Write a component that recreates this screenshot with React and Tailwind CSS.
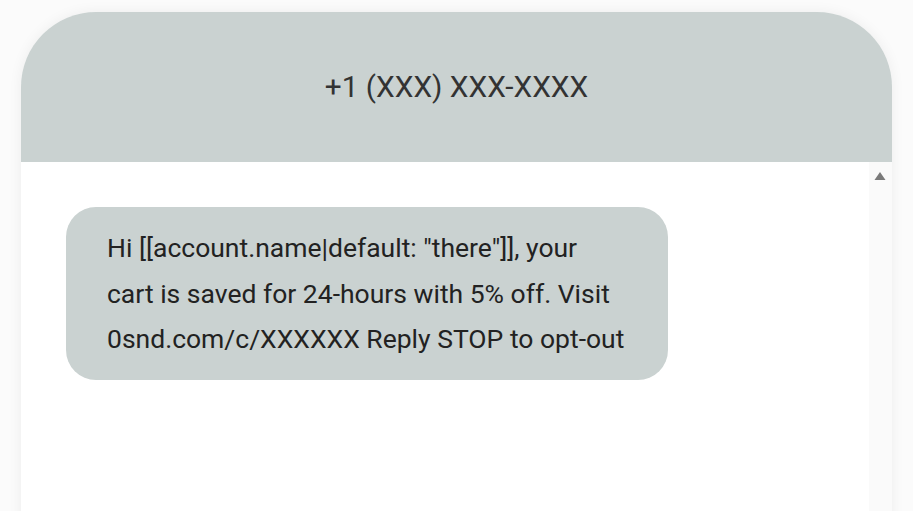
export default function App() {
  return (
    <div className="h-[511px] w-[913px] overflow-hidden bg-[#fbfbfb] pt-3 pl-[21px] pr-[21px]" style={{ fontFamily: "Roboto, 'Noto Sans', sans-serif" }}>
      <div className="flex h-[600px] flex-col overflow-hidden rounded-t-[75px] shadow-[0_0_14px_rgba(0,0,0,0.06)]">
        <div className="flex h-[150px] shrink-0 items-center justify-center bg-[#cad2d1]">
          <span className="text-[29.8px] text-[#333333]">+1 (XXX) XXX-XXXX</span>
        </div>
        <div className="flex flex-1">
          <div className="flex-1 bg-white pl-[45px] pt-[45px]">
            <div className="w-[602px] rounded-[30px] bg-[#cad2d1] py-[18px] pl-[41px] pr-[40px] text-[26.5px] leading-[45.5px] text-[#222222]">
              Hi [[account.name|default: "there"]], your cart is saved for 24-hours with 5% off. Visit 0snd.com/c/XXXXXX Reply STOP to opt-out
            </div>
          </div>
          <div className="w-[23px] shrink-0 bg-[#fafafa] pt-[9px]">
            <svg width="23" height="10" viewBox="0 0 23 10">
              <path d="M11 1 L16.5 9 L5.5 9 Z" fill="#7a7a7a" />
            </svg>
          </div>
        </div>
      </div>
    </div>
  );
}
